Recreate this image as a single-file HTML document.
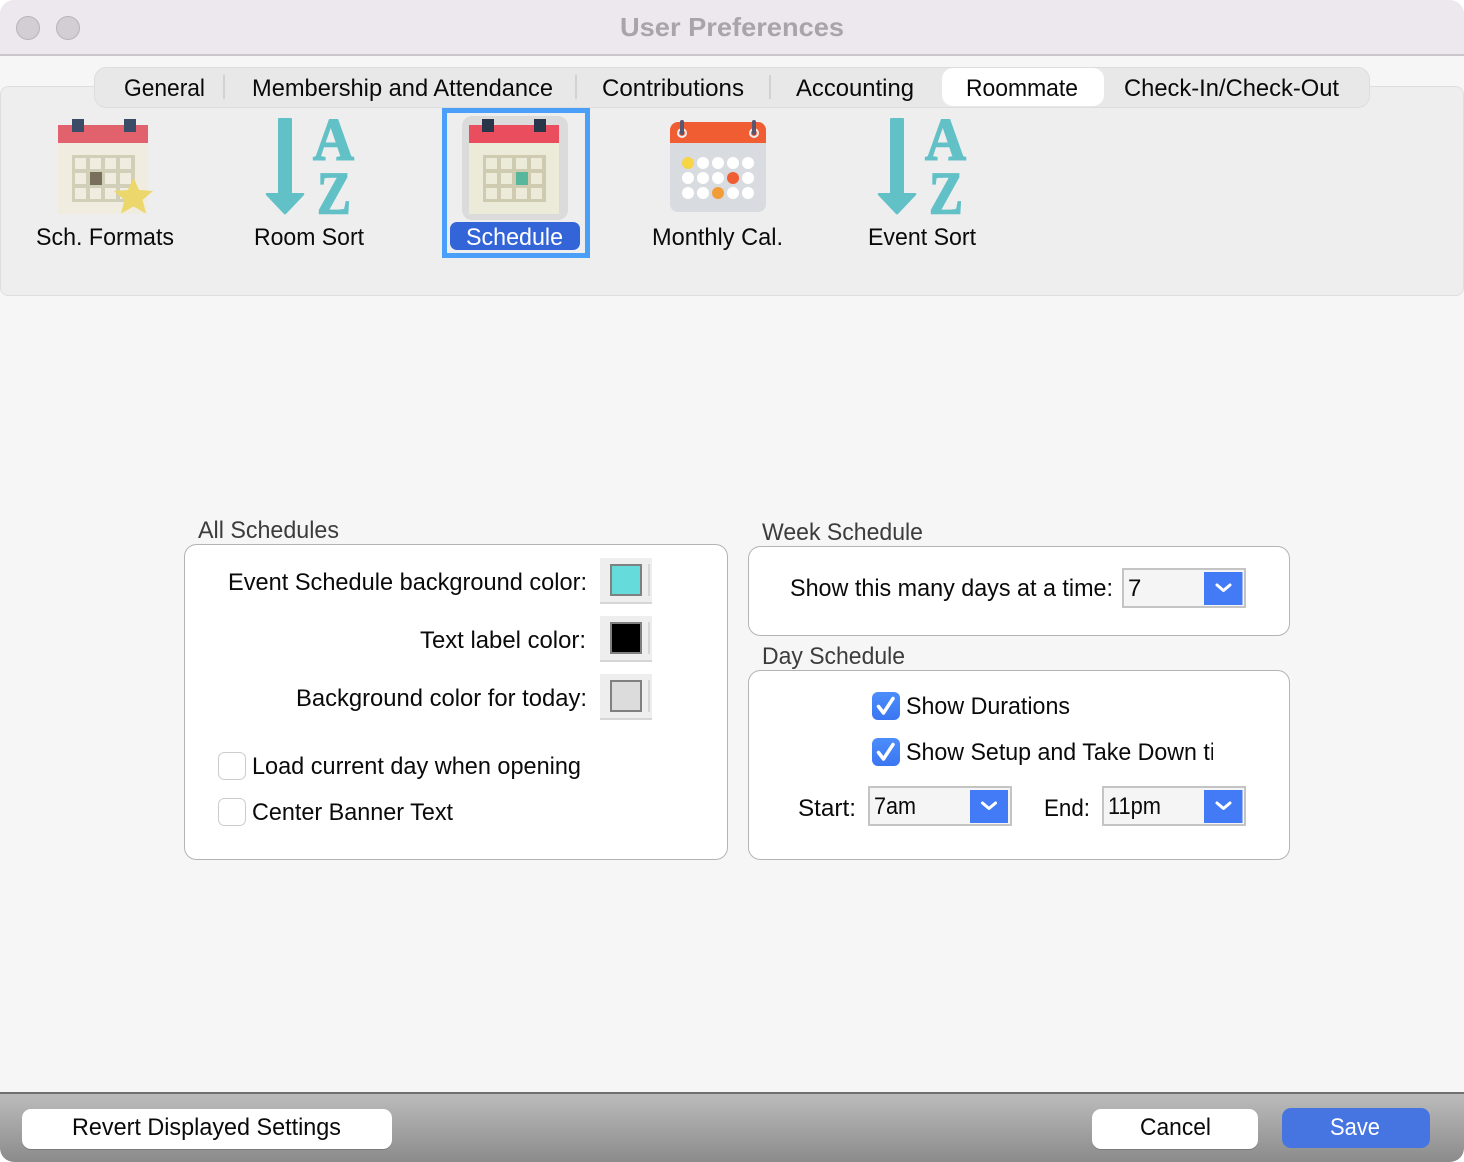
<!DOCTYPE html>
<html lang="en">
<head>
<meta charset="utf-8">
<title>User Preferences</title>
<style>
html,body{margin:0;padding:0;background:#fff;width:1464px;height:1162px;overflow:hidden}
svg{display:block;position:absolute;left:0;top:0}
text{font-family:"Liberation Sans",sans-serif;font-size:24px;fill:#0a0a0a}
.sec{fill:#3c3c3c}
.az{font-family:"Liberation Serif",serif;font-weight:700;font-size:60px;fill:#62c1c7;stroke:#62c1c7;stroke-width:1.5px}
</style>
</head>
<body>
<svg width="1464" height="1162" viewBox="0 0 1464 1162" xmlns="http://www.w3.org/2000/svg">
<defs>
<linearGradient id="foot" x1="0" y1="0" x2="0" y2="1"><stop offset="0" stop-color="#bdbdbd"/><stop offset="1" stop-color="#8b8b8b"/></linearGradient>
<linearGradient id="chk" x1="0" y1="0" x2="0" y2="1"><stop offset="0" stop-color="#4c8dfa"/><stop offset="1" stop-color="#3a76f2"/></linearGradient>
<clipPath id="clipSetup"><rect x="900" y="735" width="313" height="35"/></clipPath>
</defs>

<!-- window -->
<rect x="0" y="0" width="1464" height="1162" rx="14" fill="#f6f6f6"/>
<path d="M0 54V14A14 14 0 0 1 14 0H1450A14 14 0 0 1 1464 14V54Z" fill="#ece8ed"/>
<rect x="0" y="54" width="1464" height="2" fill="#c9c5ca"/>
<circle cx="28" cy="28" r="11.5" fill="#d2ced3" stroke="#b8b4b9"/>
<circle cx="68" cy="28" r="11.5" fill="#d2ced3" stroke="#b8b4b9"/>
<text x="620" y="36" textLength="224" lengthAdjust="spacingAndGlyphs" style="font-size:26px;font-weight:700;fill:#a8a4a9">User Preferences</text>

<!-- icon panel -->
<rect x="0.5" y="86.5" width="1463" height="209" rx="8" fill="#eeeeee" stroke="#dedede"/>

<!-- tabs -->
<rect x="94.5" y="67.5" width="1275" height="40" rx="12" fill="#e8e8e8" stroke="#dddddd"/>
<rect x="942" y="68" width="162" height="38" rx="11" fill="#ffffff"/>
<rect x="223" y="75" width="2" height="24" fill="#d2d2d2"/>
<rect x="575" y="75" width="2" height="24" fill="#d2d2d2"/>
<rect x="769" y="75" width="2" height="24" fill="#d2d2d2"/>
<text x="124" y="96" textLength="81" lengthAdjust="spacingAndGlyphs">General</text>
<text x="252" y="96" textLength="301" lengthAdjust="spacingAndGlyphs">Membership and Attendance</text>
<text x="602" y="96" textLength="142" lengthAdjust="spacingAndGlyphs">Contributions</text>
<text x="796" y="96" textLength="118" lengthAdjust="spacingAndGlyphs">Accounting</text>
<text x="966" y="96" textLength="112" lengthAdjust="spacingAndGlyphs">Roommate</text>
<text x="1124" y="96" textLength="215" lengthAdjust="spacingAndGlyphs">Check-In/Check-Out</text>

<!-- Sch. Formats icon -->
<rect x="58" y="143" width="90" height="71" fill="#f0ecdf"/>
<rect x="58" y="125" width="90" height="18" fill="#e1626d"/>
<rect x="72" y="119" width="12" height="13" fill="#3c4c66"/>
<rect x="124" y="119" width="12" height="13" fill="#3c4c66"/>
<g>
<rect x="72" y="155" width="63" height="47" fill="#d2cfb8"/>
<g fill="#f0ecdf">
<rect x="75" y="158" width="11" height="11"/><rect x="90" y="158" width="11" height="11"/><rect x="105" y="158" width="11" height="11"/><rect x="120" y="158" width="11" height="11"/>
<rect x="75" y="173" width="11" height="11"/><rect x="105" y="173" width="11" height="11"/><rect x="120" y="173" width="11" height="11"/>
<rect x="75" y="188" width="11" height="11"/><rect x="90" y="188" width="11" height="11"/><rect x="105" y="188" width="11" height="11"/><rect x="120" y="188" width="11" height="11"/>
</g>
<rect x="90" y="172" width="12" height="13" fill="#796d5c"/>
</g>
<polygon points="133.500,177.500 139,190 153,191 142.500,200 146,213.500 133.500,206.500 121,213.500 124.500,200 114,191 128,190" fill="#ecd76c"/>
<text x="36" y="245" textLength="138" lengthAdjust="spacingAndGlyphs">Sch. Formats</text>

<!-- Room Sort icon -->
<g>
<path d="M278 119q0-1 1-1h12q1 0 1 1V193H303q2 0 1 2L286 214q-1 1-2 0L266 195q-1-2 1-2H278Z" fill="#62c1c7"/>
<text class="az" x="313" y="159.500" textLength="41" lengthAdjust="spacingAndGlyphs">A</text>
<text class="az" x="317" y="213.500" textLength="34" lengthAdjust="spacingAndGlyphs">Z</text>
</g>
<text x="254" y="245" textLength="110" lengthAdjust="spacingAndGlyphs">Room Sort</text>

<!-- Schedule (selected) -->
<rect x="444.500" y="110.500" width="143" height="145" fill="#eeeeee" stroke="#4aa0f8" stroke-width="5"/>
<rect x="462" y="116" width="106" height="104" rx="10" fill="#dbdbdb"/>
<rect x="469" y="143" width="90" height="71" fill="#ecead9"/>
<rect x="469" y="125" width="90" height="18" fill="#ea4d5d"/>
<rect x="482" y="119" width="12" height="13" fill="#293549"/>
<rect x="534" y="119" width="12" height="13" fill="#293549"/>
<rect x="483" y="155" width="63" height="47" fill="#cfcbb0"/>
<g fill="#ecead9">
<rect x="486" y="158" width="11" height="11"/><rect x="501" y="158" width="11" height="11"/><rect x="516" y="158" width="11" height="11"/><rect x="531" y="158" width="11" height="11"/>
<rect x="486" y="173" width="11" height="11"/><rect x="501" y="173" width="11" height="11"/><rect x="531" y="173" width="11" height="11"/>
<rect x="486" y="188" width="11" height="11"/><rect x="501" y="188" width="11" height="11"/><rect x="516" y="188" width="11" height="11"/><rect x="531" y="188" width="11" height="11"/>
</g>
<rect x="516" y="172" width="12" height="13" fill="#57b79c"/>
<rect x="450" y="222" width="130" height="28" rx="7" fill="#3465d8"/>
<text x="466" y="245" textLength="97" lengthAdjust="spacingAndGlyphs" style="fill:#ffffff">Schedule</text>

<!-- Monthly Cal. icon -->
<path d="M670 143H766V204a8 8 0 0 1-8 8H678a8 8 0 0 1-8-8Z" fill="#d8dbe0"/>
<path d="M670 143V130a8 8 0 0 1 8-8H758a8 8 0 0 1 8 8V143Z" fill="#f05d32"/>
<circle cx="682" cy="133" r="4" fill="#f05d32" stroke="#eeeeee" stroke-width="2"/>
<circle cx="754" cy="133" r="4" fill="#f05d32" stroke="#eeeeee" stroke-width="2"/>
<rect x="680" y="120" width="4" height="15" rx="2" fill="#5a5670"/>
<rect x="752" y="120" width="4" height="15" rx="2" fill="#5a5670"/>
<g fill="#ffffff">
<circle cx="703" cy="163" r="6"/><circle cx="718" cy="163" r="6"/><circle cx="733" cy="163" r="6"/><circle cx="748" cy="163" r="6"/>
<circle cx="688" cy="178" r="6"/><circle cx="703" cy="178" r="6"/><circle cx="718" cy="178" r="6"/><circle cx="748" cy="178" r="6"/>
<circle cx="688" cy="193" r="6"/><circle cx="703" cy="193" r="6"/><circle cx="733" cy="193" r="6"/><circle cx="748" cy="193" r="6"/>
</g>
<circle cx="688" cy="163" r="6" fill="#f8d545"/>
<circle cx="733" cy="178" r="6" fill="#f05d32"/>
<circle cx="718" cy="193" r="6" fill="#f29c38"/>
<text x="652" y="245" textLength="131" lengthAdjust="spacingAndGlyphs">Monthly Cal.</text>

<!-- Event Sort icon -->
<g transform="translate(612 0)">
<path d="M278 119q0-1 1-1h12q1 0 1 1V193H303q2 0 1 2L286 214q-1 1-2 0L266 195q-1-2 1-2H278Z" fill="#62c1c7"/>
<text class="az" x="313" y="159.500" textLength="41" lengthAdjust="spacingAndGlyphs">A</text>
<text class="az" x="317" y="213.500" textLength="34" lengthAdjust="spacingAndGlyphs">Z</text>
</g>
<text x="868" y="245" textLength="108" lengthAdjust="spacingAndGlyphs">Event Sort</text>

<!-- All Schedules -->
<text class="sec" x="198" y="538" textLength="141" lengthAdjust="spacingAndGlyphs">All Schedules</text>
<rect x="184.500" y="544.500" width="543" height="315" rx="12" fill="#ffffff" stroke="#b4b4b4"/>
<text x="228" y="590" textLength="359" lengthAdjust="spacingAndGlyphs">Event Schedule background color:</text>
<text x="420" y="648" textLength="166" lengthAdjust="spacingAndGlyphs">Text label color:</text>
<text x="296" y="706" textLength="291" lengthAdjust="spacingAndGlyphs">Background color for today:</text>

<rect x="600" y="558" width="52" height="46" fill="#eeeeee"/><rect x="600" y="602" width="52" height="2" fill="#d6d6d6"/><rect x="648" y="564" width="2" height="32" fill="#d6d6d6"/>
<rect x="611" y="565" width="30" height="30" fill="#66dbdb" stroke="#808080" stroke-width="2"/>
<rect x="600" y="616" width="52" height="46" fill="#eeeeee"/><rect x="600" y="660" width="52" height="2" fill="#d6d6d6"/><rect x="648" y="622" width="2" height="32" fill="#d6d6d6"/>
<rect x="611" y="623" width="30" height="30" fill="#000000" stroke="#808080" stroke-width="2"/>
<rect x="600" y="674" width="52" height="46" fill="#eeeeee"/><rect x="600" y="718" width="52" height="2" fill="#d6d6d6"/><rect x="648" y="680" width="2" height="32" fill="#d6d6d6"/>
<rect x="611" y="681" width="30" height="30" fill="#dcdcdc" stroke="#808080" stroke-width="2"/>

<rect x="218.500" y="752.500" width="27" height="27" rx="6" fill="#ffffff" stroke="#cccccc"/>
<text x="252" y="774" textLength="329" lengthAdjust="spacingAndGlyphs">Load current day when opening</text>
<rect x="218.500" y="798.500" width="27" height="27" rx="6" fill="#ffffff" stroke="#cccccc"/>
<text x="252" y="820" textLength="201" lengthAdjust="spacingAndGlyphs">Center Banner Text</text>

<!-- Week Schedule -->
<text class="sec" x="762" y="540" textLength="161" lengthAdjust="spacingAndGlyphs">Week Schedule</text>
<rect x="748.500" y="546.500" width="541" height="89" rx="12" fill="#ffffff" stroke="#b4b4b4"/>
<text x="790" y="596" textLength="323" lengthAdjust="spacingAndGlyphs">Show this many days at a time:</text>
<rect x="1123" y="569" width="122" height="38" fill="#f5f5f5" stroke="#c4c4c4" stroke-width="2"/>
<rect x="1204" y="572" width="38.500" height="33" fill="#437bf6"/>
<path d="M1217 585l6.500 5.500 6.500-5.500" fill="none" stroke="#ffffff" stroke-width="3" stroke-linecap="round" stroke-linejoin="round"/>
<text x="1128" y="596">7</text>

<!-- Day Schedule -->
<text class="sec" x="762" y="664" textLength="143" lengthAdjust="spacingAndGlyphs">Day Schedule</text>
<rect x="748.500" y="670.500" width="541" height="189" rx="12" fill="#ffffff" stroke="#b4b4b4"/>
<rect x="872" y="692" width="28" height="28" rx="6" fill="url(#chk)"/>
<path d="M878.500 706.500l5 6.500 9.500-14.500" fill="none" stroke="#ffffff" stroke-width="3.500" stroke-linecap="round" stroke-linejoin="round"/>
<text x="906" y="714" textLength="164" lengthAdjust="spacingAndGlyphs">Show Durations</text>
<rect x="872" y="738" width="28" height="28" rx="6" fill="url(#chk)"/>
<path d="M878.500 752.500l5 6.500 9.500-14.500" fill="none" stroke="#ffffff" stroke-width="3.500" stroke-linecap="round" stroke-linejoin="round"/>
<g clip-path="url(#clipSetup)"><text x="906" y="760" textLength="309" lengthAdjust="spacingAndGlyphs">Show Setup and Take Down ti</text></g>
<text x="798" y="816" textLength="58" lengthAdjust="spacingAndGlyphs">Start:</text>
<rect x="869" y="787" width="142" height="38" fill="#f5f5f5" stroke="#c4c4c4" stroke-width="2"/>
<rect x="970" y="790" width="38" height="33" fill="#437bf6"/>
<path d="M982.500 803l6.500 5.500 6.500-5.500" fill="none" stroke="#ffffff" stroke-width="3" stroke-linecap="round" stroke-linejoin="round"/>
<text x="874" y="814" textLength="42" lengthAdjust="spacingAndGlyphs">7am</text>
<text x="1044" y="816" textLength="46" lengthAdjust="spacingAndGlyphs">End:</text>
<rect x="1103" y="787" width="142" height="38" fill="#f5f5f5" stroke="#c4c4c4" stroke-width="2"/>
<rect x="1204" y="790" width="38.500" height="33" fill="#437bf6"/>
<path d="M1217 803l6.500 5.500 6.500-5.500" fill="none" stroke="#ffffff" stroke-width="3" stroke-linecap="round" stroke-linejoin="round"/>
<text x="1108" y="814" textLength="53" lengthAdjust="spacingAndGlyphs">11pm</text>

<!-- footer -->
<path d="M0 1092H1464V1148a14 14 0 0 1-14 14H14a14 14 0 0 1-14-14Z" fill="url(#foot)"/>
<rect x="0" y="1092" width="1464" height="2" fill="#707070"/>
<rect x="22" y="1110" width="370" height="40" rx="9" fill="#7a7a7a"/>
<rect x="22" y="1109" width="370" height="40" rx="9" fill="#ffffff"/>
<text x="72" y="1135" textLength="269" lengthAdjust="spacingAndGlyphs">Revert Displayed Settings</text>
<rect x="1092" y="1110" width="166" height="40" rx="9" fill="#7a7a7a"/>
<rect x="1092" y="1109" width="166" height="40" rx="9" fill="#ffffff"/>
<text x="1140" y="1135" textLength="71" lengthAdjust="spacingAndGlyphs">Cancel</text>
<rect x="1282" y="1108" width="148" height="40" rx="9" fill="#4675e2"/>
<text x="1330" y="1135" textLength="50" lengthAdjust="spacingAndGlyphs" style="fill:#ffffff">Save</text>
</svg>
</body>
</html>
